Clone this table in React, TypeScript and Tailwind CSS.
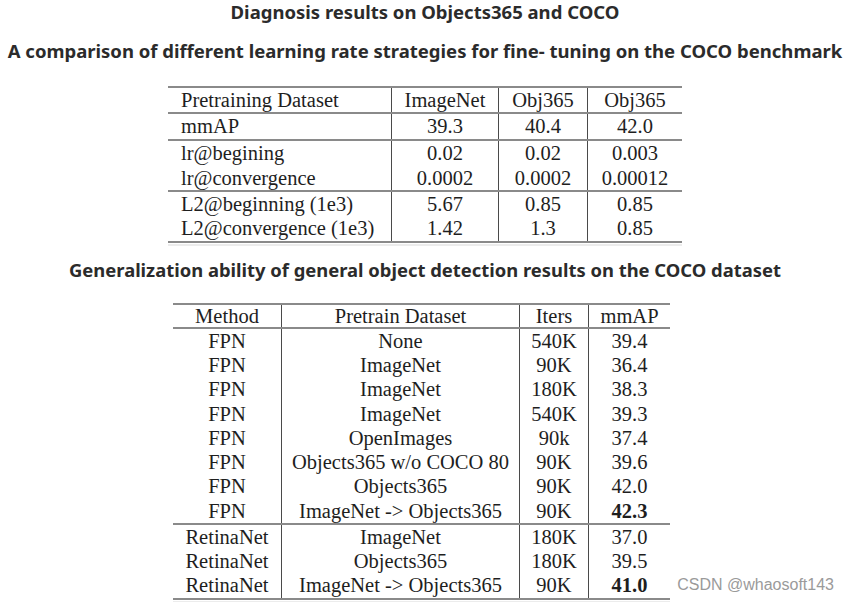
import React from "react";

const serif = { fontFamily: '"Liberation Serif", "Times New Roman", serif' };

function Cell({ children, first, left, bold }: { children: React.ReactNode; first?: boolean; left?: boolean; bold?: boolean }) {
  return (
    <div
      className={
        "flex items-center h-full whitespace-nowrap " +
        (first ? "" : "border-l border-[#4a4a4a] ") +
        (left ? "justify-start pl-[13px] " : "justify-center ") +
        (bold ? "font-bold" : "")
      }
    >
      {children}
    </div>
  );
}

const t1Cols = "grid grid-cols-[223px_107px_89px_95px]";
const t2Cols = "grid grid-cols-[108px_238px_69px_82px]";

function T1Row({ cells, h }: { cells: string[]; h: string }) {
  return (
    <div className={t1Cols + " " + h}>
      {cells.map((c, i) => (
        <Cell key={i} first={i === 0} left={i === 0}>
          {c}
        </Cell>
      ))}
    </div>
  );
}

function T2Row({ cells, bold }: { cells: string[]; bold?: boolean }) {
  return (
    <div className={t2Cols + " h-[24.25px]"}>
      {cells.map((c, i) => (
        <Cell key={i} first={i === 0} bold={bold && i === 3}>
          {c}
        </Cell>
      ))}
    </div>
  );
}

export default function App() {
  const heading = "font-bold text-[#2b2b2b] whitespace-nowrap flex items-center justify-center";
  const hFont = { fontFamily: '"Noto Sans", "Open Sans", sans-serif' };
  return (
    <div className="relative w-[850px] h-[602px] bg-white overflow-hidden flex flex-col">
      <div className={heading + " h-[24px] text-[18.5px]"} style={hFont}>
        Diagnosis results on Objects365 and COCO
      </div>
      <div className={heading + " mt-[15px] h-[24px] text-[18.5px]"} style={hFont}>
        A comparison of different learning rate strategies for fine- tuning on the COCO benchmark
      </div>

      {/* Table 1 */}
      <div className="mt-[23px] ml-[168px] w-[514px] text-[20.5px] text-[#1e1e1e] leading-none" style={serif}>
        <div className="border-t-2 border-[#8a8a8a]">
          <T1Row h="h-[24px]" cells={["Pretraining Dataset", "ImageNet", "Obj365", "Obj365"]} />
        </div>
        <div className="border-t-2 border-[#8a8a8a]">
          <T1Row h="h-[25px]" cells={["mmAP", "39.3", "40.4", "42.0"]} />
        </div>
        <div className="border-t-2 border-[#8a8a8a]">
          <T1Row h="h-[25px]" cells={["lr@begining", "0.02", "0.02", "0.003"]} />
          <T1Row h="h-[24px]" cells={["lr@convergence", "0.0002", "0.0002", "0.00012"]} />
        </div>
        <div className="border-t-2 border-b-2 border-[#8a8a8a]">
          <T1Row h="h-[24px]" cells={["L2@beginning (1e3)", "5.67", "0.85", "0.85"]} />
          <T1Row h="h-[25px]" cells={["L2@convergence (1e3)", "1.42", "1.3", "0.85"]} />
        </div>
        <div className="h-[2px] mt-[1px] bg-[#ececec]" />
      </div>

      <div className={heading + " mt-[12px] h-[24px] text-[18.4px]"} style={hFont}>
        Generalization ability of general object detection results on the COCO dataset
      </div>

      {/* Table 2 */}
      <div className="mt-[21px] ml-[173px] w-[497px] text-[20.5px] text-[#1e1e1e] leading-none" style={serif}>
        <div className="border-t-2 border-[#8a8a8a]">
          <div className={t2Cols + " h-[22px]"}>
            {["Method", "Pretrain Dataset", "Iters", "mmAP"].map((c, i) => (
              <Cell key={i} first={i === 0}>
                {c}
              </Cell>
            ))}
          </div>
        </div>
        <div className="border-t-2 border-[#8a8a8a]">
          <T2Row cells={["FPN", "None", "540K", "39.4"]} />
          <T2Row cells={["FPN", "ImageNet", "90K", "36.4"]} />
          <T2Row cells={["FPN", "ImageNet", "180K", "38.3"]} />
          <T2Row cells={["FPN", "ImageNet", "540K", "39.3"]} />
          <T2Row cells={["FPN", "OpenImages", "90k", "37.4"]} />
          <T2Row cells={["FPN", "Objects365 w/o COCO 80", "90K", "39.6"]} />
          <T2Row cells={["FPN", "Objects365", "90K", "42.0"]} />
          <T2Row cells={["FPN", "ImageNet -> Objects365", "90K", "42.3"]} bold />
        </div>
        <div className="border-t-2 border-b-2 border-[#8a8a8a]">
          <T2Row cells={["RetinaNet", "ImageNet", "180K", "37.0"]} />
          <T2Row cells={["RetinaNet", "Objects365", "180K", "39.5"]} />
          <T2Row cells={["RetinaNet", "ImageNet -> Objects365", "90K", "41.0"]} bold />
        </div>
        <div className="h-[2px] mt-[1px] bg-[#ececec]" />
      </div>

      <div
        className="absolute right-[16px] top-[576px] text-[16px] leading-[18px] text-[#9a9a9a] whitespace-nowrap"
        style={{ fontFamily: '"Liberation Sans", Arial, sans-serif' }}
      >
        CSDN @whaosoft143
      </div>
    </div>
  );
}
